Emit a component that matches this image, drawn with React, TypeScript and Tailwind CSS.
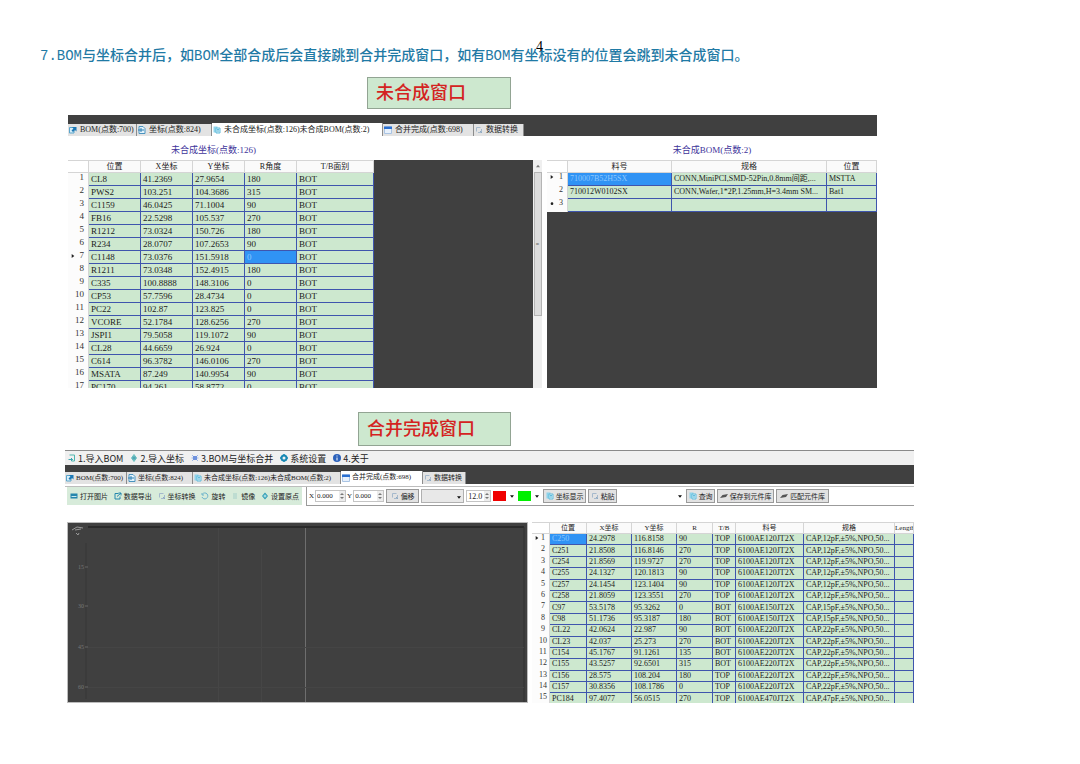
import type { ReactNode } from 'react';

type Row = string[];

const COORDS: Row[] = [
  ['CL8', '41.2369', '27.9654', '180', 'BOT'],
  ['PWS2', '103.251', '104.3686', '315', 'BOT'],
  ['C1159', '46.0425', '71.1004', '90', 'BOT'],
  ['FB16', '22.5298', '105.537', '270', 'BOT'],
  ['R1212', '73.0324', '150.726', '180', 'BOT'],
  ['R234', '28.0707', '107.2653', '90', 'BOT'],
  ['C1148', '73.0376', '151.5918', '0', 'BOT'],
  ['R1211', '73.0348', '152.4915', '180', 'BOT'],
  ['C335', '100.8888', '148.3106', '0', 'BOT'],
  ['CP53', '57.7596', '28.4734', '0', 'BOT'],
  ['PC22', '102.87', '123.825', '0', 'BOT'],
  ['VCORE', '52.1784', '128.6256', '270', 'BOT'],
  ['JSPI1', '79.5058', '119.1072', '90', 'BOT'],
  ['CL28', '44.6659', '26.924', '0', 'BOT'],
  ['C614', '96.3782', '146.0106', '270', 'BOT'],
  ['MSATA', '87.249', '140.9954', '90', 'BOT'],
  ['PC170', '94.361', '58.8772', '0', 'BOT'],
];

const UNMERGED_BOM: Row[] = [
  ['710007B52H5SX', 'CONN,MiniPCI,SMD-52Pin,0.8mm间距,...', 'MSTTA'],
  ['710012W0102SX', 'CONN,Wafer,1*2P,1.25mm,H=3.4mm SM...', 'Bat1'],
  ['', '', ''],
];

const MERGED: Row[] = [
  ['C250', '24.2978', '116.8158', '90', 'TOP', '6100AE120JT2X', 'CAP,12pF,±5%,NPO,50...', ''],
  ['C251', '21.8508', '116.8146', '270', 'TOP', '6100AE120JT2X', 'CAP,12pF,±5%,NPO,50...', ''],
  ['C254', '21.8569', '119.9727', '270', 'TOP', '6100AE120JT2X', 'CAP,12pF,±5%,NPO,50...', ''],
  ['C255', '24.1327', '120.1813', '90', 'TOP', '6100AE120JT2X', 'CAP,12pF,±5%,NPO,50...', ''],
  ['C257', '24.1454', '123.1404', '90', 'TOP', '6100AE120JT2X', 'CAP,12pF,±5%,NPO,50...', ''],
  ['C258', '21.8059', '123.3551', '270', 'TOP', '6100AE120JT2X', 'CAP,12pF,±5%,NPO,50...', ''],
  ['C97', '53.5178', '95.3262', '0', 'BOT', '6100AE150JT2X', 'CAP,15pF,±5%,NPO,50...', ''],
  ['C98', '51.1736', '95.3187', '180', 'BOT', '6100AE150JT2X', 'CAP,15pF,±5%,NPO,50...', ''],
  ['CL22', '42.0624', '22.987', '90', 'BOT', '6100AE220JT2X', 'CAP,22pF,±5%,NPO,50...', ''],
  ['CL23', '42.037', '25.273', '270', 'BOT', '6100AE220JT2X', 'CAP,22pF,±5%,NPO,50...', ''],
  ['C154', '45.1767', '91.1261', '135', 'BOT', '6100AE220JT2X', 'CAP,22pF,±5%,NPO,50...', ''],
  ['C155', '43.5257', '92.6501', '315', 'BOT', '6100AE220JT2X', 'CAP,22pF,±5%,NPO,50...', ''],
  ['C156', '28.575', '108.204', '180', 'TOP', '6100AE220JT2X', 'CAP,22pF,±5%,NPO,50...', ''],
  ['C157', '30.8356', '108.1786', '0', 'TOP', '6100AE220JT2X', 'CAP,22pF,±5%,NPO,50...', ''],
  ['PC184', '97.4077', '56.0515', '270', 'TOP', '6100AE470JT2X', 'CAP,47pF,±5%,NPO,50...', ''],
];

function Icon({ children }: { children: ReactNode }) {
  return (
    <svg viewBox="0 0 16 16" className="size-2 shrink-0" fill="none" strokeWidth="2" aria-hidden="true">
      {children}
    </svg>
  );
}

const icons = {
  bom: (
    <Icon>
      <path d="M1 3h9v11H1z" fill="#d8eef8" stroke="#5aa5cc" />
      <path d="M6 2h9v9l-3-3-4 4-3-3 4-4z" fill="#1d78b5" />
    </Icon>
  ),
  coord: (
    <Icon>
      <path d="M2 1h8l4 4v10H2z" fill="#e4f3fb" stroke="#4a93bf" />
      <path d="M0 8h12M6 4v8" stroke="#2d7fb3" />
    </Icon>
  ),
  list: (
    <Icon>
      <path d="M1 1h8v12H1z" fill="#8fd3ea" />
      <path d="M6 4h8v10H6z" fill="#d3eef7" stroke="#62bcdc" />
      <path d="M8 7h4M8 10h4" stroke="#62bcdc" />
    </Icon>
  ),
  windowed: (
    <Icon>
      <path d="M1 2h14v13H1z" fill="#e8f1fc" stroke="#a9c4e4" />
      <path d="M0 1h16v5H0z" fill="#2a6fd0" />
    </Icon>
  ),
  convert: (
    <Icon>
      <path d="M3 11V3h8M13 6v7H6" stroke="#a5b9cc" />
      <path d="M10 10l4 4" stroke="#8ea9c2" />
    </Icon>
  ),
  importBom: (
    <Icon>
      <path d="M3 2h10v12H7" stroke="#4fb7ae" />
      <path d="M1 11h8M6 8l3 3-3 3" stroke="#3aa6b0" />
    </Icon>
  ),
  target: (
    <Icon>
      <path d="M8 1l5 7-5 7-5-7z" fill="#9fdcd9" stroke="#63bcbc" />
      <path d="M8 4v8M4 8h8" stroke="#3795a8" />
    </Icon>
  ),
  merge: (
    <Icon>
      <path d="M2 2l12 12M14 2L2 14M1 8h14" stroke="#9db8ea" />
      <path d="M4 4h8v8H4z" fill="#6f92dd" />
    </Icon>
  ),
  gear: (
    <Icon>
      <circle cx="8" cy="8" r="5" stroke="#1889b4" strokeWidth="4" />
      <path d="M8 0v3M8 13v3M0 8h3M13 8h3" stroke="#1889b4" strokeWidth="3" />
    </Icon>
  ),
  info: (
    <Icon>
      <circle cx="8" cy="8" r="8" fill="#2c62bb" />
      <path d="M8 7v6M8 3v2" stroke="#fff" />
    </Icon>
  ),
  picture: (
    <Icon>
      <path d="M1 3h14v10H1z" fill="#2587ad" />
      <path d="M3 9h10" stroke="#c9ecf2" />
    </Icon>
  ),
  exportData: (
    <Icon>
      <path d="M9 3H2v11h10V9" stroke="#2587ad" />
      <path d="M6 9l8-7M9 2h5v5" stroke="#2587ad" />
    </Icon>
  ),
  rotate: (
    <Icon>
      <path d="M3 4a6 6 0 1 1-1 6M2 2v4h4" stroke="#6bb3cb" />
    </Icon>
  ),
  mirror: (
    <Icon>
      <path d="M6 2v12M10 2v12" stroke="#a5cfc9" />
    </Icon>
  ),
  origin: (
    <Icon>
      <path d="M8 1l6 7-6 7-6-7z" fill="#2e9cb5" />
      <path d="M8 5v6M5 8h6" stroke="#c7edf0" />
    </Icon>
  ),
  save: (
    <Icon>
      <path d="M0 12l5-6 11-2-4 6z" fill="#555" />
    </Icon>
  ),
};

function Tabs({ small, active }: { small?: boolean; active: number }) {
  const tabs = [
    { icon: icons.bom, label: 'BOM(点数:700)' },
    { icon: icons.coord, label: '坐标(点数:824)' },
    { icon: icons.list, label: '未合成坐标(点数:126)未合成BOM(点数:2)' },
    { icon: icons.windowed, label: '合并完成(点数:698)' },
    { icon: icons.convert, label: '数据转换' },
  ];
  return (
    <div
      role="tablist"
      className={`grid items-end ${
        small
          ? 'grid-cols-[62px_66px_148px_82px_43px] text-[7px]'
          : 'grid-cols-[69px_75px_171px_91px_50px] text-[8px]'
      }`}
    >
      {tabs.map((tab, i) => (
        <button
          key={tab.label}
          type="button"
          role="tab"
          aria-selected={i === active}
          className={`flex items-center overflow-hidden whitespace-nowrap border-r border-[#8c8c8c] pl-px leading-none ${
            small ? 'gap-0.5' : 'gap-[3px]'
          } ${i === active ? 'h-[13px] bg-white' : 'h-3 bg-[#e3e3e3]'}`}
        >
          {tab.icon}
          {tab.label}
        </button>
      ))}
    </div>
  );
}

interface GridProps {
  label: string;
  heads: string[];
  rows: Row[];
  cols: string[];
  selected: [number, number];
  newRow?: boolean;
  headClass: string;
  rowClass: string;
  className: string;
}

function Grid({ label, heads, rows, cols, selected, newRow, headClass, rowClass, className }: GridProps) {
  return (
    <table aria-label={label} className={`table-fixed border-separate border-spacing-0 leading-none ${className}`}>
      <colgroup>
        {cols.map((c, i) => (
          <col key={i} className={c} />
        ))}
      </colgroup>
      <thead>
        <tr className={headClass}>
          <th className="border-b border-r border-t border-[#d5d5d5] bg-white p-0" />
          {heads.map((h) => (
            <th
              key={h}
              className="overflow-hidden whitespace-nowrap border-b border-r border-t border-[#d5d5d5] bg-[#fafafa] p-0 text-center font-normal"
            >
              {h}
            </th>
          ))}
        </tr>
      </thead>
      <tbody>
        {rows.map((row, r) => (
          <tr key={r} className={rowClass}>
            <th scope="row" className="border-r border-[#d5d5d5] bg-[#fcfcfc] p-0 pr-1 align-top font-normal text-[#333]">
              <span className="flex items-center justify-between pl-[3px]">
                <svg viewBox="0 0 6 6" className="size-1 shrink-0" fill="#222" aria-hidden="true">
                  {r === selected[0] && <path d="M1 0l4 3-4 3z" />}
                  {newRow && r === rows.length - 1 && <circle cx="3" cy="4" r="2" />}
                </svg>
                {r + 1}
              </span>
            </th>
            {row.map((cell, c) => (
              <td
                key={c}
                className={`overflow-hidden whitespace-nowrap border-b border-r border-[#3f55ad] p-0 pl-0.5 ${
                  r === selected[0] && c === selected[1] ? 'bg-[#3093f4] text-[#8cc8ff]' : 'bg-[#cde8cf]'
                }`}
              >
                {cell}
              </td>
            ))}
          </tr>
        ))}
      </tbody>
    </table>
  );
}

function MenuItem({ icon, children }: { icon: ReactNode; children: ReactNode }) {
  return (
    <button type="button" className="flex items-center gap-0.5 whitespace-nowrap">
      {icon}
      {children}
    </button>
  );
}

function ToolButton({ icon, className, children }: { icon: ReactNode; className: string; children: ReactNode }) {
  return (
    <button
      type="button"
      className={`flex h-3.5 shrink-0 items-center justify-center gap-0.5 whitespace-nowrap border border-[#9a9a9a] bg-[#e2e2e2] ${className}`}
    >
      {icon}
      {children}
    </button>
  );
}

function Spinner({ label, value, className }: { label: string; value: string; className: string }) {
  return (
    <span className={`flex h-3 shrink-0 items-center border border-[#c4c4c4] bg-white ${className}`}>
      <input aria-label={label} defaultValue={value} className="w-full min-w-0 bg-transparent pl-px outline-none" />
      <svg viewBox="0 0 6 10" className="h-2.5 w-1.5 shrink-0 bg-[#ececec]" fill="#777">
        <path d="M1 4l2-2 2 2zM1 6l2 2 2-2z" />
      </svg>
    </span>
  );
}

function DropDown({ label, className }: { label: string; className: string }) {
  return (
    <span className={`relative flex h-3.5 shrink-0 ${className}`}>
      <select aria-label={label} className="w-full appearance-none outline-none" />
      <svg viewBox="0 0 6 4" className="pointer-events-none absolute right-0.5 top-1.5 h-[3px] w-1" fill="#111">
        <path d="M0 0h6L3 4z" />
      </svg>
    </span>
  );
}

function ColorPick({ label, color }: { label: string; color: string }) {
  return (
    <button type="button" aria-label={label} className="flex w-[23px] shrink-0 items-center gap-1">
      <span className={`h-2.5 w-[13px] ${color}`} />
      <svg viewBox="0 0 6 4" className="h-[3px] w-1" fill="#111">
        <path d="M0 0h6L3 4z" />
      </svg>
    </button>
  );
}

function Board() {
  const marks = [44, 83, 124, 164];
  return (
    <div className="min-w-0 flex-1 border border-[#bcbcbc] bg-[#404040]">
      <svg className="h-full w-full" role="img" aria-label="坐标图">
        <path d="M20 4h436" stroke="#151515" />
        <path d="M456 4v176" stroke="#303030" />
        <path d="M18 20v156" stroke="#363636" />
        <path d="M237.5 5v176" stroke="#6e6e6e" />
        <path d="M193.5 26v154M150.5 5v176" stroke="#464646" />
        <path d="M20 124.5h436M20 164.5h436" stroke="#454545" />
        <path d="M4 7l5-3 6 1M7 7l6-1M8 10l2 2 1-2" stroke="#999" fill="none" />
        {marks.map((y, i) => (
          <g key={y}>
            <text x="10" y={y + 2} fill="#777" className="font-['Liberation_Serif',serif] text-[6px]">
              {(i + 1) * 15}
            </text>
            <path d={`M17 ${y}h3`} stroke="#666" />
          </g>
        ))}
      </svg>
    </div>
  );
}

export default function App() {
  return (
    <main className="min-h-screen overflow-hidden bg-white font-['Liberation_Serif','Noto_Sans_CJK_SC',serif] text-[#222]">
      <header className="relative pl-10 pt-[46px]">
        <h1 className="whitespace-nowrap font-['Liberation_Mono','Noto_Sans_CJK_SC',monospace] text-sm font-medium leading-5 text-[#1f7aa5]">
          7.BOM与坐标合并后，如BOM全部合成后会直接跳到合并完成窗口，如有BOM有坐标没有的位置会跳到未合成窗口。
        </h1>
        <span className="absolute left-1/2 top-10 -ml-1 text-sm leading-none text-black">4</span>
      </header>

      <h2 className="ml-[367px] mt-[11px] flex h-8 w-36 items-center border border-[#92a493] bg-[#cde8cf] pl-2 text-lg font-medium leading-none text-[#d4231f]">
        未合成窗口
      </h2>

      <section className="ml-[68px] mr-[203px] mt-1.5">
        <div className="flex h-[21px] items-end bg-[#404040]">
          <Tabs active={2} />
        </div>
        <div className="flex h-[252px]">
          <div className="flex min-w-0 flex-1 flex-col">
            <h3 className="h-6 pl-[103px] text-[9px] leading-7 text-[#40349a]">未合成坐标(点数:126)</h3>
            <div className="flex min-h-0 flex-1 items-start overflow-hidden bg-[#404040]">
              <Grid
                label="未合成坐标"
                heads={['位置', 'X坐标', 'Y坐标', 'R角度', 'T/B面别']}
                rows={COORDS}
                cols={['w-[21px]', 'w-[52px]', 'w-[52px]', 'w-[52px]', 'w-[52px]', 'w-[77px]']}
                selected={[6, 3]}
                headClass="h-[13px] text-[8px]"
                rowClass="h-[13px]"
                className="w-[306px] text-[9px]"
              />
            </div>
          </div>
          <div className="mr-[5px] mt-6 flex w-[9px] flex-col items-center bg-[#efefef]">
            <svg viewBox="0 0 6 6" className="my-1 size-1" fill="#777">
              <path d="M0 5l3-4 3 4z" />
            </svg>
            <div className="flex h-36 w-2 items-center justify-center border border-[#b5b5b5] bg-[#dcdcdc] text-[6px] leading-none text-[#666]">
              ≡
            </div>
          </div>
          <div className="flex w-[330px] shrink-0 flex-col">
            <h3 className="h-6 text-center text-[9px] leading-7 text-[#40349a]">未合成BOM(点数:2)</h3>
            <div className="min-h-0 flex-1 bg-[#404040]">
              <Grid
                label="未合成BOM"
                heads={['料号', '规格', '位置']}
                rows={UNMERGED_BOM}
                cols={['w-[21px]', 'w-[104px]', 'w-[155px]', 'w-[50px]']}
                selected={[0, 0]}
                newRow
                headClass="h-[13px]"
                rowClass="h-[13px]"
                className="w-full text-[8px]"
              />
            </div>
          </div>
        </div>
      </section>

      <h2 className="ml-[358px] mt-6 flex h-[34px] w-[153px] items-center border border-[#92a493] bg-[#cde8cf] pl-2 text-lg font-medium leading-none text-[#d4231f]">
        合并完成窗口
      </h2>

      <section className="ml-[65px] mr-[166px] mt-1">
        <nav className="flex h-[15px] items-center gap-[7px] border-t border-[#8a8a8a] bg-[#f0f0f0] pl-[3px] font-['Noto_Sans_CJK_SC',sans-serif] text-[9px] leading-none">
          <MenuItem icon={icons.importBom}>1.导入BOM</MenuItem>
          <MenuItem icon={icons.target}>2.导入坐标</MenuItem>
          <MenuItem icon={icons.merge}>3.BOM与坐标合并</MenuItem>
          <MenuItem icon={icons.gear}>系统设置</MenuItem>
          <MenuItem icon={icons.info}>4.关于</MenuItem>
        </nav>
        <div className="flex h-[19px] items-end bg-[#404040]">
          <Tabs small active={3} />
        </div>
        <div className="mt-0.5 flex h-5 gap-1 border-t border-[#bdbdbd] font-['Noto_Sans_CJK_SC',sans-serif] text-[7px] leading-none">
          <div className="ml-0.5 flex h-[18px] w-[235px] shrink-0 items-center justify-between bg-[#d7ebda] px-[3px]">
            <MenuItem icon={icons.picture}>打开图片</MenuItem>
            <MenuItem icon={icons.exportData}>数据导出</MenuItem>
            <MenuItem icon={icons.convert}>坐标转换</MenuItem>
            <MenuItem icon={icons.rotate}>旋转</MenuItem>
            <MenuItem icon={icons.mirror}>镜像</MenuItem>
            <MenuItem icon={icons.origin}>设置原点</MenuItem>
          </div>
          <div className="flex min-w-0 flex-1 items-center gap-0.5 border-b border-l border-[#9b9b9b] pl-0.5">
            <span className="flex items-center gap-px font-['Liberation_Serif',serif]">
              X
              <Spinner label="X" value="0.000" className="w-[31px]" />
              Y
              <Spinner label="Y" value="0.000" className="w-[31px]" />
            </span>
            <ToolButton icon={icons.convert} className="w-[33px]">偏移</ToolButton>
            <DropDown label="图层" className="w-[43px] border border-[#b0b0b0] bg-[#e8e8e8]" />
            <span className="flex font-['Liberation_Serif',serif] text-[8px]">
              <Spinner label="字号" value="12.0" className="w-[25px]" />
            </span>
            <ColorPick label="红色" color="bg-[#f00000]" />
            <ColorPick label="绿色" color="bg-[#00f000]" />
            <ToolButton icon={icons.list} className="w-[43px]">坐标显示</ToolButton>
            <ToolButton icon={icons.convert} className="w-[29px]">粘贴</ToolButton>
            <DropDown label="查询内容" className="w-[65px] bg-white" />
            <ToolButton icon={icons.list} className="w-[29px]">查询</ToolButton>
            <ToolButton icon={icons.save} className="w-[57px]">保存到元件库</ToolButton>
            <ToolButton icon={icons.save} className="w-[53px]">匹配元件库</ToolButton>
          </div>
        </div>
        <div className="ml-0.5 mt-4 flex h-[181px] gap-1">
          <Board />
          <div className="w-[382px] shrink-0 overflow-hidden">
            <Grid
              label="合并完成"
              heads={['位置', 'X坐标', 'Y坐标', 'R', 'T/B', '料号', '规格', 'Length']}
              rows={MERGED}
              cols={[
                'w-[18px]',
                'w-[37px]',
                'w-[45px]',
                'w-[45px]',
                'w-[36px]',
                'w-[23px]',
                'w-[68px]',
                'w-[91px]',
                'w-[19px]',
              ]}
              selected={[0, 0]}
              headClass="h-3 text-[7px]"
              rowClass="h-[11px]"
              className="h-[183px] w-full text-[8px]"
            />
          </div>
        </div>
      </section>
    </main>
  );
}
